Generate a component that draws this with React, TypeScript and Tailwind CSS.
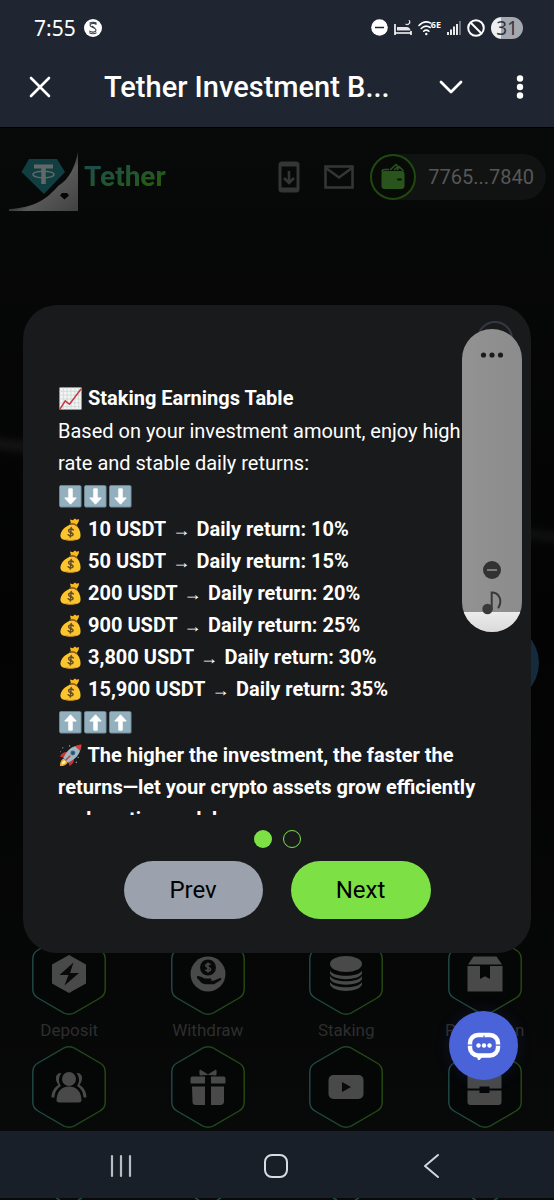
import type { ReactNode } from "react";

const earnings = [
  { amount: "10", rate: "10%" },
  { amount: "50", rate: "15%" },
  { amount: "200", rate: "20%" },
  { amount: "900", rate: "25%" },
  { amount: "3,800", rate: "30%" },
  { amount: "15,900", rate: "35%" },
];

/* ---------- Emoji ---------- */

function Emoji({ label, children }: { label: string; children: ReactNode }) {
  return (
    <svg
      viewBox="0 0 24 24"
      role="img"
      aria-label={label}
      className="inline-block w-[23px] h-[23px] mx-px align-[-5px]"
    >
      {children}
    </svg>
  );
}

function ChartEmoji() {
  return (
    <Emoji label="Chart increasing">
      <rect x="0.5" y="0.5" width="23" height="23" fill="#f4f4f4" />
      <path
        d="M4.5 .5v23M8.5 .5v23M12.5 .5v23M16.5 .5v23M20.5 .5v23M.5 4.5h23M.5 8.5h23M.5 12.5h23M.5 16.5h23M.5 20.5h23"
        stroke="#c9d6d6"
        strokeWidth="0.8"
      />
      <path d="M1 23l5.500-8.500 4.500 3.500 12-16" fill="none" stroke="#c8393c" strokeWidth="1.600" />
    </Emoji>
  );
}

function ArrowEmoji({ up = false }: { up?: boolean }) {
  return (
    <Emoji label={up ? "Up" : "Down"}>
      <rect x="0.5" y="0.5" width="23" height="23" rx="1.500" fill="#6f8f9e" />
      <rect x="0.5" y="0.5" width="22" height="22" rx="1.500" fill="#93b0be" />
      <path
        d={up ? "M12 4l6 6.500h-4.200V20h-3.600v-9.500H6z" : "M12 20l-6-6.500h4.200V4h3.600v9.500H18z"}
        fill="#fff"
        stroke="#fff"
        strokeLinejoin="round"
      />
    </Emoji>
  );
}

function MoneyEmoji() {
  return (
    <Emoji label="Money bag">
      <path
        d="M13 6.500C7 8 1.500 13 1.500 18.500c0 4 4 5 10.500 5s10.500-1 10.500-5c0-5-2-9-5.500-11.500z"
        fill="#fcc52e"
      />
      <path d="M4 21.500c4 1.500 12 1.500 16.500 0-1.500 1.600-4.500 2-8.500 2s-7-.5-8-2z" fill="#e59b1c" />
      <path d="M12.500 6l-1-4.500 3 .8L16.500.5l2 1.300 2.500-.8-.5 3-2.500 4z" fill="#f9b921" />
      <path d="M11.500 6.500c2-.8 5-.2 7 1.500" fill="none" stroke="#8a5a24" strokeWidth="1.500" strokeLinecap="round" />
      <path
        d="M15 12.500c-1-1.500-5-1.500-5 .7 0 2.300 5 1.500 4.800 4-.2 2-4.200 2-5.300.2M12.800 10l-1.100 10"
        fill="none"
        stroke="#5f4a2a"
        strokeWidth="1.500"
        strokeLinecap="round"
      />
    </Emoji>
  );
}

function RocketEmoji() {
  return (
    <Emoji label="Rocket">
      <path d="M5 15c-3 1-4 4.500-4 8 3.500 0 7-1 8-4z" fill="#f7a92b" />
      <path d="M5.500 17c-1.800.8-2.500 2.500-2.600 4.200 1.800-.1 3.600-.9 4.300-2.600z" fill="#fff3b0" />
      <path d="M9 8.500C5.500 8 2.500 10 1 13l5 1.500zM15.500 15c.5 3.500-1.500 6.500-4.500 8l-1.500-5z" fill="#c8322f" />
      <path d="M4.500 14.500C8 7 13 2 20 1.500l2.500 2.500C22 11 17 16 9.500 19.500z" fill="#9fb8c6" />
      <path d="M17 2.500C19 1 22 .5 23.500.5c0 1.500-.5 4.500-2 6.500z" fill="#dc3b36" />
      <circle cx="14.500" cy="9.500" r="2.600" fill="#4c6878" />
      <circle cx="14.500" cy="9.500" r="1.400" fill="#25507c" />
      <path d="M7.500 16.500l4-4" stroke="#d03a35" strokeWidth="1.500" strokeLinecap="round" />
      <g fill="#aeb6ba">
        <circle cx="4" cy="4" r="0.600" />
        <circle cx="11" cy="2" r="0.700" />
        <circle cx="20" cy="14" r="0.600" />
        <circle cx="18" cy="19" r="0.700" />
        <circle cx="1.500" cy="8" r="0.500" />
      </g>
    </Emoji>
  );
}

/* ---------- Phone chrome ---------- */

function StatusBar() {
  return (
    <div className="flex items-center h-[55px] pl-[34px] pr-[31px] text-white">
      <span className="font-['Noto_Sans',sans-serif] text-[21px] leading-6">7:55</span>
      <svg viewBox="0 0 18 18" className="w-[18px] h-[18px] ml-2">
        <circle cx="9" cy="9" r="9" fill="#fff" />
        <path
          d="M12.500 5.500c-2-1.600-6.500-1.500-6.500.8s6 2.200 6 4.700-4.500 2.800-6.700.9M5.500 4.300C7.500 2.800 11 3 12.600 4.300M5.300 13.600c2 1.500 5.600 1.400 7.200 0M8 7l3 2.500"
          fill="none"
          stroke="#39414b"
          strokeWidth="1.100"
        />
      </svg>

      <div className="flex items-center gap-[6px] ml-auto">
        <svg viewBox="0 0 17 17" className="w-[17px] h-[17px]">
          <circle cx="8.500" cy="8.500" r="8.300" fill="#fff" />
          <path d="M4 8.500h9" stroke="#1f2631" strokeWidth="1.500" />
        </svg>
        <svg viewBox="0 0 18 17" className="w-[18px] h-[17px]">
          <path d="M1 5v11M17 12v4M1 14h16" stroke="#fff" strokeWidth="1.600" fill="none" />
          <path d="M3 8h9.500q3.500 0 4 3.500H3z" fill="#e8e4ee" />
          <path d="M15 1c1.600 2.600-.5 5-3.500 4.200 3 1.800 6.300-1.200 3.500-4.200z" fill="#fff" stroke="#fff" strokeWidth="0.600" />
        </svg>
        <div className="flex">
          <svg viewBox="0 0 16 16" className="w-4 h-4">
            <g fill="none" stroke="#fff" strokeWidth="1.600" strokeLinecap="round">
              <path d="M1 5.500C4.500 1.800 9 1.300 12.500 3" />
              <path d="M3.200 8.500c2.600-2.700 6-3 9-1" />
              <path d="M5.700 11.200c1.500-1.500 3.700-1.500 5.200 0" />
            </g>
            <circle cx="8.300" cy="14" r="1.200" fill="#fff" />
          </svg>
          <span className="-ml-[3px] font-['Noto_Sans',sans-serif] text-[9px] font-bold leading-[10px]">6E</span>
        </div>
        <svg viewBox="0 0 14 15" className="w-[14px] h-[15px]">
          <path d="M1 12v3M4 9.500V15M7 6.500V15M10 4v11" stroke="#fff" strokeWidth="1.800" />
          <path d="M13 1v14" stroke="#858b93" strokeWidth="1.500" />
        </svg>
        <svg viewBox="0 0 18 18" className="w-[18px] h-[18px]">
          <g fill="none" stroke="#fff" strokeWidth="2">
            <circle cx="9" cy="9" r="7.800" />
            <path d="M3.500 3.500l11 11" />
          </g>
        </svg>
        <span className="w-8 h-[22px] rounded-full bg-linear-to-r from-[#eceef0] from-30% to-[#a5a9af] to-30% text-center font-['Noto_Sans',sans-serif] text-[19px] leading-[22px] text-[#303641]">
          31
        </span>
      </div>
    </div>
  );
}

function TitleBar() {
  return (
    <div className="flex items-center h-16 pl-[29px] pr-[30px] text-white">
      <button type="button" aria-label="Close">
        <svg viewBox="0 0 22 22" className="w-[22px] h-[22px]">
          <path d="M2 2l18 18M20 2L2 20" stroke="#fff" strokeWidth="2.600" strokeLinecap="round" />
        </svg>
      </button>
      <h1 className="flex-1 ml-[53px] text-[29px] leading-8 font-medium whitespace-nowrap">
        Tether Investment B...
      </h1>
      <button type="button" aria-label="Minimize">
        <svg viewBox="0 0 24 14" className="w-6 h-[14px]">
          <path d="M2 2l10 10L22 2" fill="none" stroke="#fff" strokeWidth="2.800" strokeLinecap="round" strokeLinejoin="round" />
        </svg>
      </button>
      <button type="button" aria-label="More options" className="ml-[53px]">
        <svg viewBox="0 0 8 26" className="w-2 h-[26px]" fill="#fff">
          <circle cx="4" cy="4.500" r="3.200" />
          <circle cx="4" cy="13" r="3.200" />
          <circle cx="4" cy="21.500" r="3.200" />
        </svg>
      </button>
    </div>
  );
}

function NavBar() {
  return (
    <footer className="bg-[#080909]">
      <nav className="flex items-center justify-between h-[67px] bg-[#181f28] pl-[107px] pr-[109px] pt-[3px]">
        <button type="button" aria-label="Recent apps">
          <svg viewBox="0 0 28 26" className="w-7 h-[26px]">
            <path d="M5 3v20M14 3v20M23 3v20" stroke="#b9bcc1" strokeWidth="2.200" strokeLinecap="round" />
          </svg>
        </button>
        <button type="button" aria-label="Home">
          <svg viewBox="0 0 28 26" className="w-7 h-[26px]">
            <rect x="3" y="2" width="22" height="22" rx="7" fill="none" stroke="#d9dbe0" strokeWidth="2" />
          </svg>
        </button>
        <button type="button" aria-label="Back">
          <svg viewBox="0 0 28 26" className="w-7 h-[26px]">
            <path d="M21 2L8 13l13 11" fill="none" stroke="#d3d5d9" strokeWidth="2" strokeLinecap="round" strokeLinejoin="round" />
          </svg>
        </button>
      </nav>
      <div className="grid grid-cols-4 justify-items-center">
        {[0, 1, 2, 3].map((i) => (
          <svg key={i} viewBox="0 0 28 2" className="w-7 h-[2px]">
            <path d="M1 0l4 2M27 0l-4 2" stroke="#1f4a38" strokeWidth="1.500" />
          </svg>
        ))}
      </div>
    </footer>
  );
}

/* ---------- Page behind the dialog ---------- */

function SiteHeader() {
  return (
    <div className="flex items-start pl-[9px] pr-2 pt-6">
      <svg viewBox="0 0 70 60" className="w-[70px] h-[60px]">
        <defs>
          <linearGradient id="curl" x1="0.3" y1="0.300" x2="1" y2="1">
            <stop offset="0.2" stopColor="#292929" />
            <stop offset="0.450" stopColor="#585858" />
            <stop offset="1" stopColor="#414141" />
          </linearGradient>
        </defs>
        <path d="M69 0v59H0v-2c25-1 38-10 49-23C61 27 66 14 69 0z" fill="url(#curl)" />
        <path d="M20 7h28l8 13-21 22L12.500 20z" fill="#113f41" />
        <g fill="none" stroke="#646868">
          <path d="M25 14.500h19" strokeWidth="4" />
          <path d="M34.500 14v18" strokeWidth="4.500" />
          <ellipse cx="34.500" cy="22.500" rx="10.500" ry="3.300" strokeWidth="1.400" />
        </g>
        <path d="M53 41h5l2 2.500-4.500 4-4.500-4z" fill="#050505" />
      </svg>
      <span className="ml-[5px] mt-[9px] text-[28px] leading-8 font-bold bg-linear-to-br from-[#1d4d4a] from-10% to-[#265b0a] to-80% bg-clip-text text-transparent">
        Tether
      </span>

      <div className="flex items-center ml-auto h-[50px]">
        <button type="button" aria-label="Download app">
          <svg viewBox="0 0 22 32" className="w-[22px] h-8">
            <rect x="2" y="2" width="18" height="28" rx="2" fill="none" stroke="#353535" strokeWidth="3" />
            <path d="M2 3.500h18M2 28.500h18" stroke="#353535" strokeWidth="4" />
            <path d="M11 10v11M6 17l5 5 5-5" fill="none" stroke="#353535" strokeWidth="2.600" />
          </svg>
        </button>
        <button type="button" aria-label="Messages" className="ml-6">
          <svg viewBox="0 0 30 24" className="w-[30px] h-6">
            <rect x="1.500" y="1.500" width="27" height="21" fill="none" stroke="#353535" strokeWidth="2.600" />
            <path d="M2 3l13 9.500L28 3" fill="none" stroke="#353535" strokeWidth="2.600" />
          </svg>
        </button>
        <button type="button" className="flex items-center h-[46px] ml-4 pr-3 rounded-full bg-[#111212]">
          <svg viewBox="0 0 46 46" className="w-[46px] h-[46px]">
            <circle cx="23" cy="23" r="22" fill="#080a08" stroke="#1f490f" strokeWidth="2" />
            <rect x="11.500" y="17" width="23" height="18" rx="3" fill="#29541b" />
            <path d="M12 18c0-3 2-2.500 7-2.500M20 16l6-5.500 2 2-4 3.500M27 16l2.500-3 4 4" fill="none" stroke="#29541b" strokeWidth="1.600" />
            <rect x="27" y="24.500" width="5" height="2" rx="1" fill="#0a1406" />
          </svg>
          <span className="ml-3 text-[20px] leading-7 text-[#575757]">7765...7840</span>
        </button>
      </div>
    </div>
  );
}

const tileIcons = {
  deposit: (
    <>
      <path d="M18 0l17 9.500v19L18 38 1 28.500v-19z" fill="#494949" />
      <path d="M22.500 7.500L8.500 20h9l-4 10.500L28 18h-9z" fill="#080909" />
    </>
  ),
  withdraw: (
    <>
      <circle cx="18" cy="19" r="17.500" fill="#494949" />
      <circle cx="18" cy="12.500" r="8" fill="#080909" />
      <path d="M20.500 9.800c-1-1.300-4.800-1.200-4.800.8 0 2.200 4.900 1.300 4.900 3.600 0 2-4 2.100-5.200.6M18 7.500v10" stroke="#494949" strokeWidth="1.500" fill="none" />
      <path d="M7 21c3 0 5 1 7.500 2.500h6c1.500.2 1.500 2 0 2.200h-4 7l6-2.500c2-.6 2.500 1 1 2l-6.500 4h-8c-5 0-6-4-9-6z" fill="#080909" />
    </>
  ),
  staking: (
    <g fill="#494949">
      <ellipse cx="18" cy="9" rx="16" ry="8" />
      <path d="M2 15.500c3 7 29 7 32 0v3c-3 7.500-29 7.500-32 0z" />
      <path d="M2 21c3 7 29 7 32 0v3c-3 7.500-29 7.500-32 0z" />
      <path d="M2 27c3 7 29 7 32 0v2.500c-3 8.500-29 8.500-32 0z" />
    </g>
  ),
  promotion: (
    <g fill="#494949">
      <path d="M6.500 1.500h23L35 9.500H1z" />
      <path d="M.5 11h12.500v13l5-2.800 5 2.800V11h12.500v25.500H.5z" />
    </g>
  ),
  team: (
    <g fill="#494949">
      <circle cx="18" cy="11" r="7" />
      <path d="M5.500 33c0-9 4.500-14.500 12.500-14.500S30.500 24 30.500 33q-1 1.500-3 1.500h-19q-2 0-3-1.500z" />
      <path d="M10.500 5C4 4.500 3.500 12 7.500 17 3 19.500.5 24 .5 29.500h3c.2-5 2.200-9 6.500-11.500-3-4.500-2.500-9 .5-13zM25.500 5c6.500-.5 7 7 3 12 4.500 2.500 7 7 7 12.500h-3c-.2-5-2.200-9-6.500-11.500 3-4.500 2.500-9-.5-13z" />
    </g>
  ),
  gift: (
    <g fill="#494949">
      <path d="M17.500 6.500L10 2v5zM18.500 6.500L26 2v5z" stroke="#494949" strokeLinejoin="round" />
      <path d="M.5 10.500q0-2 2-2H15v7H.5zM21 8.500h12.500q2 0 2 2v5H21zM2 18.500h13V37H6q-3.500 0-3.500-3zM21 18.500h13V34q-.5 3-3.500 3H21z" />
    </g>
  ),
  video: (
    <>
      <rect x="0.5" y="7" width="35" height="24" rx="5" fill="#494949" />
      <path d="M14 14l9 5-9 5z" fill="#080909" />
    </>
  ),
  chest: (
    <g fill="#494949">
      <path d="M.5 20.500V8q0-5 5-5h24q5 0 5 5v12.500h-12v-2h-10v2z" />
      <path d="M.5 22.500h12v2.500h10v-2.500h12V34q0 3-3 3h-28q-3 0-3-3z" />
    </g>
  ),
};

function Tile({ icon, label }: { icon: ReactNode; label?: string }) {
  return (
    <a href="#" className="flex flex-col items-center">
      <span className="grid place-items-center">
        <svg viewBox="0 0 74 82" className="col-start-1 row-start-1 w-[74px] h-[82px]">
          <defs>
            <linearGradient id="hex" x1="0" y1="0" x2="1" y2="0">
              <stop offset="0" stopColor="#204a4a" />
              <stop offset="0.500" stopColor="#1d4622" />
              <stop offset="1" stopColor="#284b10" />
            </linearGradient>
          </defs>
          <path
            d="M32 1.800q5-2 10 0l26 15.200q5.200 3 5.200 9v30q0 6-5.200 9L42 80.200q-5 2-10 0L6 65Q.8 62 .8 56V26Q.8 20 6 17z"
            fill="#050606"
            stroke="url(#hex)"
            strokeWidth="1.400"
          />
        </svg>
        <svg viewBox="0 0 36 38" className="col-start-1 row-start-1 w-9 h-[38px]">
          {icon}
        </svg>
      </span>
      {label && <span className="mt-[3px] text-[17px] leading-6 text-[#2e2e2e]">{label}</span>}
    </a>
  );
}

function Shortcuts() {
  return (
    <div className="grid grid-cols-4 gap-y-1 pb-[3px] mt-auto">
      <Tile icon={tileIcons.deposit} label="Deposit" />
      <Tile icon={tileIcons.withdraw} label="Withdraw" />
      <Tile icon={tileIcons.staking} label="Staking" />
      <Tile icon={tileIcons.promotion} label="Promotion" />
      <Tile icon={tileIcons.team} />
      <Tile icon={tileIcons.gift} />
      <Tile icon={tileIcons.video} />
      <Tile icon={tileIcons.chest} />
    </div>
  );
}

/* ---------- Dialog ---------- */

function VolumePanel() {
  return (
    <div className="absolute top-6 right-[9px] w-[60px] h-[303px] rounded-full overflow-hidden bg-linear-to-r from-[#929293] to-[#8c8c8d] flex flex-col items-center justify-end">
      <button type="button" aria-label="Sound settings" className="mt-[22px] mb-auto">
        <svg viewBox="0 0 24 8" className="w-6 h-2" fill="#1b1b1c">
          <circle cx="3.500" cy="4" r="2.600" />
          <circle cx="12" cy="4" r="2.600" />
          <circle cx="20.500" cy="4" r="2.600" />
        </svg>
      </button>
      <svg viewBox="0 0 18 18" className="w-[18px] h-[18px]">
        <circle cx="9" cy="9" r="9" fill="#323233" />
        <path d="M4 9h10" stroke="#929293" strokeWidth="1.300" />
      </svg>
      <svg viewBox="0 0 20 24" className="relative z-10 w-5 h-6 mt-3 -mb-[3px]">
        <circle cx="5.500" cy="18" r="5.200" fill="#39393a" />
        <path d="M9.700 18V1.500c7.500 0 11 8 6.800 15" fill="none" stroke="#39393a" strokeWidth="2" strokeLinecap="round" />
      </svg>
      <div className="w-full h-5 bg-linear-to-b from-[#ececec] to-[#dadada]" />
      <input
        type="range"
        aria-label="Volume"
        min={0}
        max={100}
        defaultValue={7}
        className="absolute inset-x-0 bottom-0 h-60 opacity-0 [writing-mode:vertical-lr] [direction:rtl]"
      />
    </div>
  );
}

function StakingDialog() {
  return (
    <div
      role="dialog"
      aria-label="Staking Earnings Table"
      className="relative w-full rounded-[34px] bg-[#191a1c] pt-[77px] pb-[34px] text-white"
    >
      <button
        type="button"
        aria-label="Close dialog"
        className="absolute top-4 right-[18px] w-9 h-9 rounded-full border-2 border-[#353742]"
      />

      <div className="flex flex-col gap-px h-[433px] overflow-x-hidden overflow-y-auto [scrollbar-width:none] px-[35px] text-[20px] leading-8">
        <h2 className="font-bold">
          <ChartEmoji /> Staking Earnings Table
        </h2>
        <p>Based on your investment amount, enjoy high rate and stable daily returns:</p>
        <div className="h-8 shrink-0">
          <ArrowEmoji />
          <ArrowEmoji />
          <ArrowEmoji />
        </div>
        <ul className="font-bold">
          {earnings.map((row) => (
            <li key={row.amount} className="h-8">
              <MoneyEmoji /> {row.amount} USDT{" "}
              <span className="inline-block w-[21px] text-center font-['Liberation_Sans',sans-serif] text-[18px] leading-5 font-normal">
                →
              </span>{" "}
              Daily return: {row.rate}
            </li>
          ))}
        </ul>
        <div className="h-8 shrink-0">
          <ArrowEmoji up />
          <ArrowEmoji up />
          <ArrowEmoji up />
        </div>
        <p className="font-bold">
          <RocketEmoji /> The higher the investment, the faster the returns—let your crypto assets grow
          efficiently and continuously!
        </p>
      </div>

      <div className="flex justify-center gap-[11px] mt-[15px]">
        <button type="button" aria-label="Page 1" className="w-[18px] h-[18px] rounded-full bg-[#7de146]" />
        <button type="button" aria-label="Page 2" className="w-[18px] h-[18px] rounded-full border border-[#7de146]" />
      </div>

      <div className="flex justify-center gap-7 mt-[13px] text-[24px] leading-7 text-black">
        <button type="button" className="w-[139px] h-[58px] rounded-full bg-[#9ba1ad]">
          Prev
        </button>
        <button type="button" className="w-[140px] h-[58px] rounded-full bg-[#7de146]">
          Next
        </button>
      </div>

      <VolumePanel />
    </div>
  );
}

function ChatButton() {
  return (
    <button
      type="button"
      aria-label="Open chat"
      className="absolute right-9 bottom-[51px] w-[69px] h-[69px] rounded-full bg-[#4a63d9] grid place-items-center shadow-[0_0_16px_rgba(74,99,217,0.15)]"
    >
      <svg viewBox="0 0 34 28" className="w-[34px] h-7">
        <path d="M10 23h7l-4.500 5q-2 .5-2-1.500z" fill="#fff" />
        <rect x="3" y="3" width="28" height="20.500" rx="8" fill="none" stroke="#fff" strokeWidth="4.400" />
        <path d="M0 13.200h5.500M28.500 13.200h5.500M17 3.500v2" stroke="#4a63d9" strokeWidth="1.200" />
        <g fill="#fff">
          <circle cx="11.500" cy="13.500" r="2.200" />
          <circle cx="17" cy="13.500" r="2.200" />
          <circle cx="22.500" cy="13.500" r="2.200" />
        </g>
      </svg>
    </button>
  );
}

export default function App() {
  return (
    <div className="flex flex-col min-h-screen bg-[#080909] font-['Roboto',sans-serif]">
      <header className="bg-[#1f2631] border-b border-black pb-2">
        <StatusBar />
        <TitleBar />
      </header>

      <main className="relative flex flex-col flex-1 min-h-[1000px] overflow-hidden bg-linear-to-b from-[#080909] via-[#030303] to-[#080909]">
        {/* Soft light streaks in the backdrop */}
        <div className="absolute -left-10 top-[313px] w-24 h-2 rotate-6 rounded-full bg-white/8 blur-xs" />
        <div className="absolute -right-10 top-[404px] w-24 h-2 rotate-6 rounded-full bg-white/6 blur-xs" />

        <SiteHeader />
        <Shortcuts />

        <div className="absolute right-[15px] top-[495px] w-20 h-20 rounded-full bg-[#152a3c]" />
        <div className="absolute inset-0 flex items-center px-[23px] pb-0.5">
          <StakingDialog />
        </div>
        <ChatButton />
      </main>

      <NavBar />
    </div>
  );
}
